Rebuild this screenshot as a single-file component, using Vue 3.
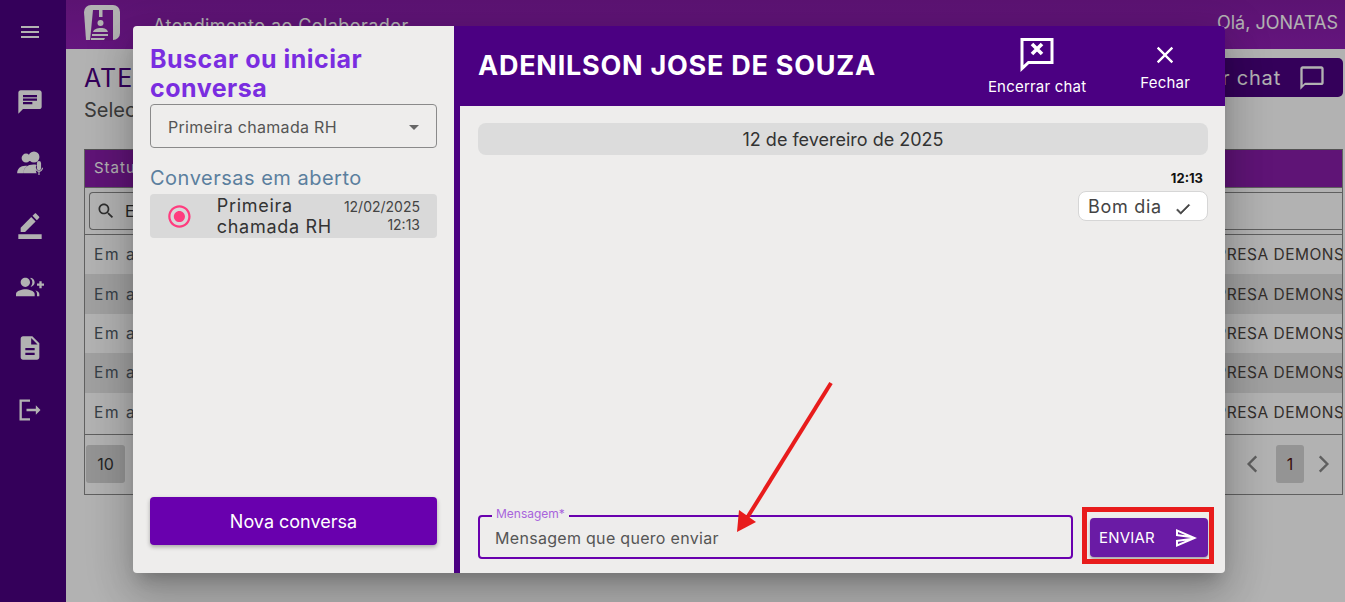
<script setup>
const menuIcons = [
  'M20 2H4c-1.1 0-1.99.9-1.99 2L2 22l4-4h14c1.1 0 2-.9 2-2V4c0-1.1-.9-2-2-2zM6 9h12v2H6V9zm8 5H6v-2h8v2zm4-6H6V6h12v2z',
  'M8.6 3.100a3.800 3.800 0 1 0 0 7.600 3.800 3.800 0 0 0 0-7.600zM15.400 1.300a4.700 4.700 0 1 0 0 9.400 4.700 4.700 0 0 0 0-9.400zM6.500 20c0-5 3.500-7.500 8.500-7.500 1 0 2 .1 2.700.4-.5.6-.7 1.300-.7 2.100v2.500c0 1 .3 1.800.8 2.500zM1 20c0-4 2.800-6.500 7-6.500.6 0 1.100 0 1.600.1-2 1.400-3.200 3.600-3.200 6.400zM19.700 9.500a1.800 1.800 0 0 0-1.800 1.800v4.400a1.800 1.800 0 0 0 3.600 0v-4.400a1.800 1.800 0 0 0-1.800-1.800zM16.200 15.200h1c.1 1.500 1.200 2.600 2.500 2.600s2.400-1.100 2.500-2.600h1c-.1 1.900-1.500 3.300-3 3.500v2.800h-1v-2.800c-1.500-.2-2.900-1.600-3-3.500z',
  'M22 24H2v-4h20v4zM13.060 5.190l3.750 3.750L7.750 18H4v-3.750l9.060-9.060zm4.820 2.680-3.750-3.750 1.830-1.830c.39-.39 1.020-.39 1.410 0l2.340 2.340c.39.39.39 1.020 0 1.410l-1.830 1.830z',
  'M22 9V7h-2v2h-2v2h2v2h2v-2h2V9h-2zM8 12c2.210 0 4-1.790 4-4s-1.790-4-4-4-4 1.790-4 4 1.790 4 4 4zm0 2c-2.670 0-8 1.340-8 4v2h16v-2c0-2.660-5.330-4-8-4zm4.510-8.950C13.430 5.110 14 6.490 14 8s-.57 2.890-1.490 3.950C14.470 11.700 16 10.040 16 8s-1.530-3.700-3.490-3.950zm4.020 9.780c.89.83 1.470 1.870 1.470 3.170v2h2v-2c0-1.450-1.590-2.510-3.470-3.170z',
  'M14 2H6c-1.100 0-1.990.9-1.990 2L4 20c0 1.100.89 2 1.990 2H18c1.100 0 2-.9 2-2V8l-6-6zm2 16H8v-2h8v2zm0-4H8v-2h8v2zm-3-5V3.500L18.500 9H13z',
  'M5 5h7V3H3v18h9v-2H5zM21 12l-4-4v3H9v2h8v3z'
]
const linhas = [1, 2, 3, 4, 5]
</script>

<template>
  <div class="app">
    <aside class="side">
      <svg class="menu-btn" viewBox="0 0 24 24"><path d="M3 18h18v-2H3v2zm0-5h18v-2H3v2zm0-7v2h18V6H3z" /></svg>
      <svg v-for="(icone, i) in menuIcons" :key="i" class="side-icon" viewBox="0 0 24 24"><path :d="icone" /></svg>
    </aside>

    <div class="main">
      <header class="topbar">
        <svg class="logo" viewBox="0 0 36 36">
          <path d="M7 0h22a7 7 0 0 1 7 7v21a7 7 0 0 1-7 7H2L0 7a7 7 0 0 1 7-7z" fill="#fff" />
          <path d="M9 5h20v31H6z" fill="#881eaa" />
          <path d="M15 4h3.500v8H15z" fill="#fff" />
          <circle cx="16.500" cy="18" r="3" fill="#fff" />
          <path d="M9 27c1-3 4-4 8-4s6 1 7 4zM8 29h16v2H8zM7 33h14l-1 2H7z" fill="#fff" />
        </svg>
        <span class="app-name">Atendimento ao Colaborador</span>
        <span class="hello">Olá, JONATAS</span>
      </header>

      <section class="page">
        <div class="page-head">
          <div>
            <h1>ATENDIMENTO</h1>
            <p>Selecione uma conversa</p>
          </div>
          <button class="start-btn">
            Iniciar chat
            <svg viewBox="0 0 24 24"><path d="M20 2H4c-1.100 0-2 .9-2 2v18l4-4h14c1.100 0 2-.9 2-2V4c0-1.100-.9-2-2-2zm0 14H6l-2 2V4h16v12z" /></svg>
          </button>
        </div>

        <div class="table">
          <div class="thead">Status</div>
          <div class="filter">
            <div class="search">
              <svg viewBox="0 0 24 24"><path d="M15.500 14h-.79l-.28-.27C15.410 12.590 16 11.110 16 9.500 16 5.910 13.090 3 9.500 3S3 5.910 3 9.500 5.910 16 9.500 16c1.610 0 3.090-.59 4.230-1.570l.27.28v.79l5 4.990L20.490 19l-4.990-5zm-6 0C7.010 14 5 11.990 5 9.500S7.010 5 9.500 5 14 7.010 14 9.500 11.990 14 9.500 14z" /></svg>
              <span>Em atendimento</span>
            </div>
          </div>
          <div v-for="l in linhas" :key="l" class="row">
            <span class="status">Em atendimento</span>
            <span class="company">EMPRESA DEMONSTRACAO</span>
          </div>
          <div class="tfoot">
            <span class="page-size">10</span>
            <div class="pager">
              <svg viewBox="0 0 24 24"><path d="M15 5l-7 7 7 7" /></svg>
              <span class="page-num">1</span>
              <svg viewBox="0 0 24 24"><path d="M9 5l7 7-7 7" /></svg>
            </div>
          </div>
        </div>
      </section>
    </div>

    <div class="overlay">
      <div class="modal">
        <div class="left">
          <h2>Buscar ou iniciar conversa</h2>
          <div class="select">
            <span>Primeira chamada RH</span>
            <i class="caret"></i>
          </div>
          <h3>Conversas em aberto</h3>
          <div class="conversation">
            <svg class="radio" viewBox="0 0 24 24"><path d="M12 7c-2.760 0-5 2.240-5 5s2.240 5 5 5 5-2.240 5-5-2.240-5-5-5zm0-5C6.480 2 2 6.480 2 12s4.480 10 10 10 10-4.480 10-10S17.520 2 12 2zm0 18c-4.420 0-8-3.580-8-8s3.580-8 8-8 8 3.580 8 8-3.580 8-8 8z" /></svg>
            <span class="conv-name">Primeira chamada RH</span>
            <span class="conv-date">12/02/2025<br />12:13</span>
          </div>
          <button class="new-btn">Nova conversa</button>
        </div>

        <div class="right">
          <header class="chat-head">
            <span class="chat-name">ADENILSON JOSE DE SOUZA</span>
            <div class="head-action end">
              <svg viewBox="0 0 36 36"><path d="M3 3.500h30v23H9.500L3 32.500z" /><path class="x" d="M13 8l10 10M23 8l-10 10" /></svg>
              <span>Encerrar chat</span>
            </div>
            <div class="head-action close">
              <svg viewBox="0 0 24 24"><path d="M19 6.410 17.590 5 12 10.590 6.410 5 5 6.410 10.590 12 5 17.590 6.410 19 12 13.410 17.590 19 19 17.590 13.410 12z" /></svg>
              <span>Fechar</span>
            </div>
          </header>

          <div class="messages">
            <div class="day">12 de fevereiro de 2025</div>
            <div class="time">12:13</div>
            <div class="bubble">
              <span>Bom dia</span>
              <svg viewBox="0 0 24 24"><path d="M9 16.200 4.800 12l-1.400 1.400L9 19 21 7l-1.400-1.400L9 16.200z" /></svg>
            </div>
          </div>

          <div class="composer">
            <div class="field">
              <label>Mensagem*</label>
              <span>Mensagem que quero enviar</span>
            </div>
            <button class="send">
              ENVIAR
              <svg viewBox="0 0 24 24"><path d="M4.010 6.030l7.510 3.220-7.520-1 .01-2.220m7.500 8.720L4 17.970v-2.220l7.510-1M2.010 3L2 10l15 2-15 2 .01 7L23 12 2.010 3z" /></svg>
            </button>
          </div>
        </div>
      </div>
    </div>

    <div class="mark-box"></div>
    <svg class="mark-arrow" viewBox="0 0 1345 602">
      <path d="M831 383 747 518" stroke="#e81c1c" stroke-width="4" fill="none" />
      <path d="M737 532 739 510 756 522z" fill="#e81c1c" />
    </svg>
  </div>
</template>

<style>
body {
  margin: 0;
  overflow: hidden;
}
</style>

<style scoped>
* {
  box-sizing: border-box;
}

.app {
  position: relative;
  display: flex;
  height: 602px;
  overflow: hidden;
  background: #fff;
  font-family: Inter, "Noto Sans", sans-serif;
  color: #333;
}

.side {
  width: 66px;
  flex-shrink: 0;
  display: flex;
  flex-direction: column;
  align-items: center;
  padding-top: 20px;
  padding-right: 7px;
  background: #4b0082;
}

.side svg {
  fill: #fff;
}

.menu-btn {
  width: 24px;
  height: 24px;
  margin-bottom: 44px;
}

.side-icon {
  width: 28px;
  height: 28px;
  margin-bottom: 33.500px;
}

.main {
  flex: 1;
  min-width: 0;
  display: flex;
  flex-direction: column;
}

.topbar {
  height: 49px;
  display: flex;
  align-items: flex-start;
  padding: 5px 7px 0 18px;
  background: linear-gradient(#841ca4, #901fb4);
  color: #fff;
  font-size: 18px;
}

.logo {
  width: 36px;
  height: 36px;
}

.app-name {
  margin: 10px 0 0 33px;
  letter-spacing: 0.430px;
}

.hello {
  margin: 7px 0 0 auto;
}

.page {
  flex: 1;
  padding: 9px 2px 0 18px;
}

.page-head {
  display: flex;
  justify-content: space-between;
  height: 91px;
}

h1 {
  margin: 5px 0 0;
  font-size: 25px;
  font-weight: 400;
  letter-spacing: 1px;
  color: #4b0082;
}

.page-head p {
  margin: 5px 0 0;
  font-size: 20px;
  color: #555;
}

.start-btn {
  width: 190px;
  height: 39px;
  display: flex;
  align-items: center;
  justify-content: flex-end;
  gap: 17px;
  padding: 0 17px 0 0;
  border: 0;
  border-radius: 5px;
  background: #4b0082;
  color: #fff;
  font: 20px Inter, sans-serif;
  letter-spacing: 0.800px;
  white-space: nowrap;
}

.start-btn svg {
  width: 28px;
  height: 28px;
  fill: #fff;
}

.table {
  height: 346px;
  border: 1px solid #8a8a8a;
  border-top-color: #777;
}

.thead {
  height: 37px;
  padding: 8px 9px;
  background: #881eaa;
  color: #fff;
  font-size: 15px;
  letter-spacing: 1px;
}

.filter {
  height: 48px;
  padding-top: 4px;
  padding-left: 4px;
  border-top: 1px solid #888;
  border-bottom: 1px solid #888;
}

.search {
  height: 38px;
  display: flex;
  align-items: center;
  gap: 9px;
  padding-left: 6px;
  border: 1px solid #888;
  border-right: 0;
  border-radius: 4px 0 0 4px;
  font-size: 16px;
}

.search svg {
  width: 20px;
  height: 20px;
  fill: #444;
}

.row {
  height: 39.400px;
  display: flex;
  justify-content: space-between;
  align-items: center;
  padding-left: 9px;
  overflow: hidden;
  font-size: 15.500px;
  color: #4f5b66;
  white-space: nowrap;
}

.status {
  letter-spacing: 1.600px;
}

.row:nth-of-type(odd) {
  background: #fff;
}

.row:nth-of-type(even) {
  background: #e6e6e6;
}

.company {
  flex: 0 0 150px;
  overflow: hidden;
  color: #4b4440;
  letter-spacing: 0.500px;
}

.tfoot {
  height: 60px;
  margin-top: 2px;
  display: flex;
  justify-content: space-between;
  align-items: center;
  padding: 0 6px 0 1px;
  border-top: 1px solid #888;
  font-size: 16px;
}

.page-size,
.page-num {
  display: flex;
  align-items: center;
  justify-content: center;
  height: 38px;
  border-radius: 3px;
  background: #d4d4d4;
}

.page-size {
  width: 39px;
}

.page-num {
  width: 28px;
  margin: 0 6px 0 10px;
  color: #501010;
}

.pager {
  display: flex;
  align-items: center;
}

.pager svg {
  width: 26px;
  height: 26px;
  fill: none;
  stroke: #888;
  stroke-width: 2.200;
}

.overlay {
  position: absolute;
  inset: 0;
  display: flex;
  padding: 26px 120px 29px 133px;
  background: rgba(0, 0, 0, 0.3);
}

.modal {
  flex: 1;
  display: flex;
  border-radius: 4px;
  overflow: hidden;
  background: #eeedec;
  box-shadow: 0 11px 15px -7px rgba(0, 0, 0, 0.2), 0 24px 38px 3px rgba(0, 0, 0, 0.14), 0 9px 46px 8px rgba(0, 0, 0, 0.12);
}

.left {
  width: 321px;
  flex-shrink: 0;
  display: flex;
  flex-direction: column;
  padding: 19px 17px 28px;
}

h2 {
  margin: 0 0 1px;
  font-size: 25px;
  line-height: 29px;
  font-weight: 700;
  letter-spacing: 0.500px;
  color: #7a2de0;
}

.select {
  height: 44px;
  display: flex;
  align-items: center;
  justify-content: space-between;
  padding: 2px 17px 0;
  border: 1px solid #8a8a8a;
  border-radius: 4px;
  font-size: 16px;
  color: #555;
  letter-spacing: 0.300px;
}

.caret {
  border-left: 5px solid transparent;
  border-right: 5px solid transparent;
  border-top: 5px solid #666;
}

h3 {
  margin: 18px 0 4px;
  font-size: 20px;
  line-height: 24px;
  font-weight: 400;
  letter-spacing: 0.500px;
  color: #5b7f9e;
}

.conversation {
  height: 44px;
  display: flex;
  align-items: center;
  padding: 0 17px;
  border-radius: 4px;
  background: #d9d9d9;
}

.radio {
  width: 27px;
  height: 27px;
  margin-left: -1px;
  fill: #ff3d7f;
}

.conv-name {
  width: 128px;
  margin-left: 24px;
  font-size: 18px;
  line-height: 21px;
  letter-spacing: 0.700px;
  color: #333;
}

.conv-date {
  flex: 1;
  font-size: 14px;
  line-height: 18px;
  text-align: right;
  color: #444;
}

.new-btn {
  height: 48px;
  margin-top: auto;
  border: 0;
  border-radius: 4px;
  background: #6900ae;
  color: #fff;
  font: 400 18px Inter, sans-serif;
  box-shadow: 0 2px 4px rgba(0, 0, 0, 0.3);
}

.right {
  flex: 1;
  min-width: 0;
  display: flex;
  flex-direction: column;
  border-left: 6px solid #4b0082;
}

.chat-head {
  height: 80px;
  flex-shrink: 0;
  display: flex;
  align-items: center;
  padding-left: 18px;
  background: #4b0082;
  color: #fff;
}

.chat-name {
  margin-bottom: 1px;
  font-size: 27px;
  font-weight: 700;
  letter-spacing: 0.750px;
  white-space: nowrap;
}

.head-action {
  display: flex;
  flex-direction: column;
  align-items: center;
  font-size: 15px;
  letter-spacing: 0.200px;
  white-space: nowrap;
}

.end {
  margin-left: auto;
}

.end svg {
  width: 36px;
  height: 36px;
  margin-bottom: 5px;
  fill: none;
  stroke: #fff;
  stroke-width: 3;
}

.end .x {
  stroke-width: 3.600;
}

.close {
  margin: 1px 35px 0 54px;
}

.close svg {
  width: 28px;
  height: 28px;
  margin-bottom: 4px;
  fill: #fff;
}

.messages {
  flex: 1;
  display: flex;
  flex-direction: column;
  align-items: flex-end;
  padding: 17px 17px 0 18px;
}

.day {
  width: 100%;
  height: 32px;
  display: flex;
  align-items: center;
  justify-content: center;
  border-radius: 8px;
  background: #dcdcdc;
  font-size: 18px;
  color: #333;
}

.time {
  margin: 15px 5px 5px 0;
  font-size: 13px;
  font-weight: 700;
  line-height: 16px;
  color: #111;
}

.bubble {
  width: 130px;
  height: 30px;
  display: flex;
  align-items: center;
  justify-content: space-between;
  padding: 0 15px 0 9px;
  border: 1px solid #d6d6d6;
  border-radius: 8px;
  background: #fff;
  font-size: 18px;
  letter-spacing: 0.700px;
  color: #444;
}

.bubble svg {
  width: 18px;
  height: 18px;
  margin-top: 6px;
  fill: #444;
  stroke: #444;
  stroke-width: 0.800;
}

.composer {
  display: flex;
  align-items: flex-end;
  padding: 0 17px 14px 18px;
  gap: 17px;
}

.field {
  position: relative;
  flex: 1;
  height: 44px;
  display: flex;
  align-items: center;
  padding: 1px 15px 0;
  border: 2px solid #6900ae;
  border-radius: 4px;
  font-size: 16px;
  color: #555;
  letter-spacing: 0.300px;
}

.field label {
  position: absolute;
  left: 12px;
  top: -11px;
  padding: 0 4px;
  background: #eeedec;
  font-size: 12px;
  line-height: 15px;
  color: #a864dc;
  letter-spacing: 0;
}

.send {
  width: 118px;
  height: 39px;
  margin-bottom: 2px;
  display: flex;
  align-items: center;
  justify-content: space-between;
  padding: 0 10px 0 9px;
  border: 0;
  border-radius: 4px;
  background: #6a1ba5;
  color: #fff;
  font: 400 15px Inter, sans-serif;
  letter-spacing: 0.200px;
  box-shadow: 0 2px 3px rgba(0, 0, 0, 0.3);
}

.send svg {
  width: 24px;
  height: 24px;
  fill: #fff;
}

.mark-box {
  position: absolute;
  left: 1082px;
  top: 507px;
  width: 132px;
  height: 57px;
  border: 5px solid #e81c1c;
}

.mark-arrow {
  position: absolute;
  left: 0;
  top: 0;
  width: 1345px;
  height: 602px;
  pointer-events: none;
}
</style>
